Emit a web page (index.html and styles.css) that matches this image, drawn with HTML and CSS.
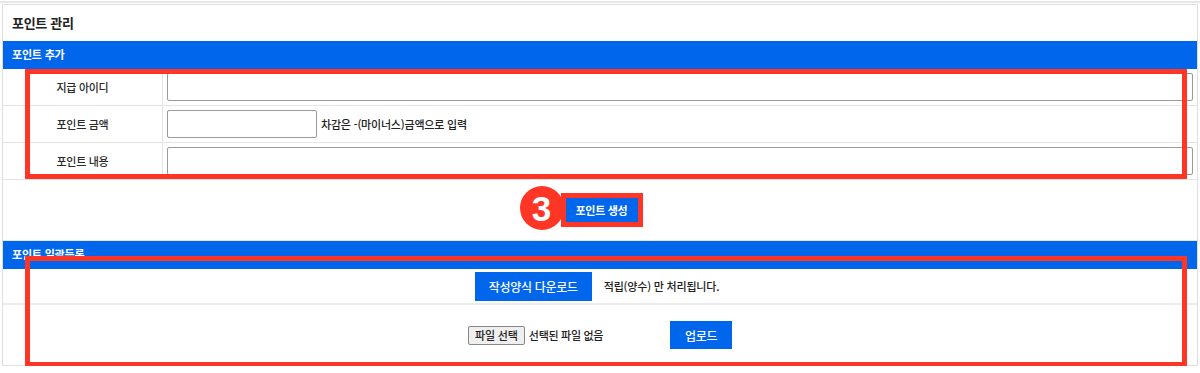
FILE: index.html
```html
<!DOCTYPE html>
<html lang="ko">
<head>
    <meta charset="UTF-8">
    <meta name="viewport" content="width=device-width, initial-scale=1.0">
    <title>포인트 관리</title>
    <link rel="stylesheet" href="styles.css">
</head>
<body>
    <div class="top-line"></div>
    <div class="panel">
        <div class="panel-title">포인트 관리</div>

        <div class="section-bar">포인트 추가</div>
        <div class="form-table">
            <div class="form-row">
                <div class="form-label">지급 아이디</div>
                <div class="form-field"><input type="text" class="input-text input-full"></div>
            </div>
            <div class="form-row">
                <div class="form-label">포인트 금액</div>
                <div class="form-field">
                    <input type="text" class="input-text input-short">
                    <span class="field-help">차감은 -(마이너스)금액으로 입력</span>
                </div>
            </div>
            <div class="form-row">
                <div class="form-label">포인트 내용</div>
                <div class="form-field"><input type="text" class="input-text input-full"></div>
            </div>
        </div>

        <div class="action-row">
            <span class="step-mark">
                <span class="step-badge">3</span>
                <button class="btn-blue btn-create">포인트 생성</button>
            </span>
        </div>

        <div class="section-bar">포인트 일괄등록</div>
        <div class="upload-row upload-first">
            <button class="btn-blue btn-download">작성양식 다운로드</button>
            <span class="upload-note">적립(양수) 만 처리됩니다.</span>
        </div>
        <div class="upload-row upload-second">
            <span class="file-picker">
                <button class="file-btn">파일 선택</button>
                <span class="file-name">선택된 파일 없음</span>
            </span>
            <button class="btn-blue btn-upload">업로드</button>
        </div>

        <div class="mark-box mark-form"></div>
        <div class="mark-box mark-upload"></div>
    </div>
</body>
</html>
```

FILE: styles.css
```css
body {
    margin: 0;
    padding-top: 1px;
    background-color: #fff;
    font-family: "Noto Sans CJK KR", "Noto Sans", sans-serif;
    font-size: 12px;
    color: #333;
}

.top-line {
    height: 2px;
    background-color: #e6e6e6;
}

.panel {
    position: relative;
    margin: 1px 2px 0 2px;
    border: 1px solid #dedede;
}

.panel-title {
    height: 36px;
    line-height: 36px;
    padding-left: 9px;
    font-size: 13px;
    font-weight: bold;
    color: #222;
    letter-spacing: -0.3px;
}

.section-bar {
    height: 28px;
    line-height: 27px;
    padding-left: 9px;
    background-color: #0067ec;
    color: #fff;
    font-size: 11px;
    font-weight: bold;
    letter-spacing: -0.2px;
}

.form-row {
    display: flex;
    height: 36px;
    border-bottom: 1px solid #e4e4e4;
}

.form-label {
    width: 159px;
    border-right: 1px solid #e4e4e4;
    display: flex;
    align-items: center;
    justify-content: center;
    font-size: 11px;
    font-weight: 500;
    letter-spacing: -0.3px;
    color: #2a2a2a;
}

.form-field {
    flex: 1;
    display: flex;
    align-items: center;
    padding: 0 4px;
}

.input-text {
    box-sizing: border-box;
    height: 28px;
    border: 1px solid #9a9a9a;
    border-radius: 2px;
    background: #fff;
    margin: 0;
}

.input-full {
    width: 100%;
}

.input-short {
    width: 150px;
}

.field-help {
    margin-left: 4px;
    font-size: 11px;
    font-weight: 500;
    letter-spacing: -0.2px;
    color: #222;
}

.action-row {
    height: 60px;
    border-bottom: 1px solid #e4e4e4;
    display: flex;
    align-items: center;
    justify-content: center;
    padding-left: 3px;
}

.step-mark {
    position: relative;
    display: inline-flex;
    border: 5px solid #ff3526;
}

.step-badge {
    position: absolute;
    left: -46px;
    top: -12px;
    width: 44px;
    height: 44px;
    border-radius: 50%;
    background-color: #ff3526;
    color: #fff;
    font-family: "Liberation Sans", Arial, sans-serif;
    font-weight: bold;
    font-size: 35px;
    line-height: 45px;
    text-align: center;
}

.btn-blue {
    border: none;
    margin: 0;
    background-color: #0067ec;
    color: #fff;
    font-family: "Noto Sans CJK KR", "Noto Sans", sans-serif;
    cursor: pointer;
}

.btn-create {
    width: 72px;
    height: 24px;
    font-size: 11px;
    font-weight: bold;
    letter-spacing: -0.3px;
}

.upload-row {
    display: flex;
    align-items: center;
    justify-content: center;
}

.upload-first {
    height: 34px;
    border-bottom: 2px solid #ececec;
    padding-right: 6px;
    gap: 12px;
}

.upload-second {
    height: 60px;
    gap: 67px;
}

.btn-download {
    width: 117px;
    height: 29px;
    font-size: 12px;
    font-weight: 500;
    letter-spacing: -0.3px;
}

.upload-note {
    font-size: 11px;
    font-weight: 500;
    color: #222;
    letter-spacing: -0.2px;
}

.btn-upload {
    width: 62px;
    height: 28px;
    font-size: 12px;
    font-weight: 500;
    letter-spacing: -0.3px;
}

.file-picker {
    display: inline-flex;
    align-items: center;
    gap: 4px;
}

.file-btn {
    box-sizing: border-box;
    height: 19px;
    width: 57px;
    padding: 0;
    margin: 0;
    border: 1px solid #888;
    border-radius: 2px;
    background-color: #efefef;
    color: #222;
    font-family: "Noto Sans CJK KR", "Noto Sans", sans-serif;
    font-size: 11px;
    font-weight: 500;
    letter-spacing: -0.2px;
}

.file-name {
    font-size: 11px;
    font-weight: 500;
    color: #222;
    letter-spacing: -0.3px;
}

.mark-box {
    position: absolute;
    left: 22px;
    width: 1162px;
    box-sizing: border-box;
    border: 5px solid #ff3526;
    pointer-events: none;
}

.mark-form {
    top: 64px;
    height: 110px;
}

.mark-upload {
    top: 251px;
    height: 111px;
}
```
